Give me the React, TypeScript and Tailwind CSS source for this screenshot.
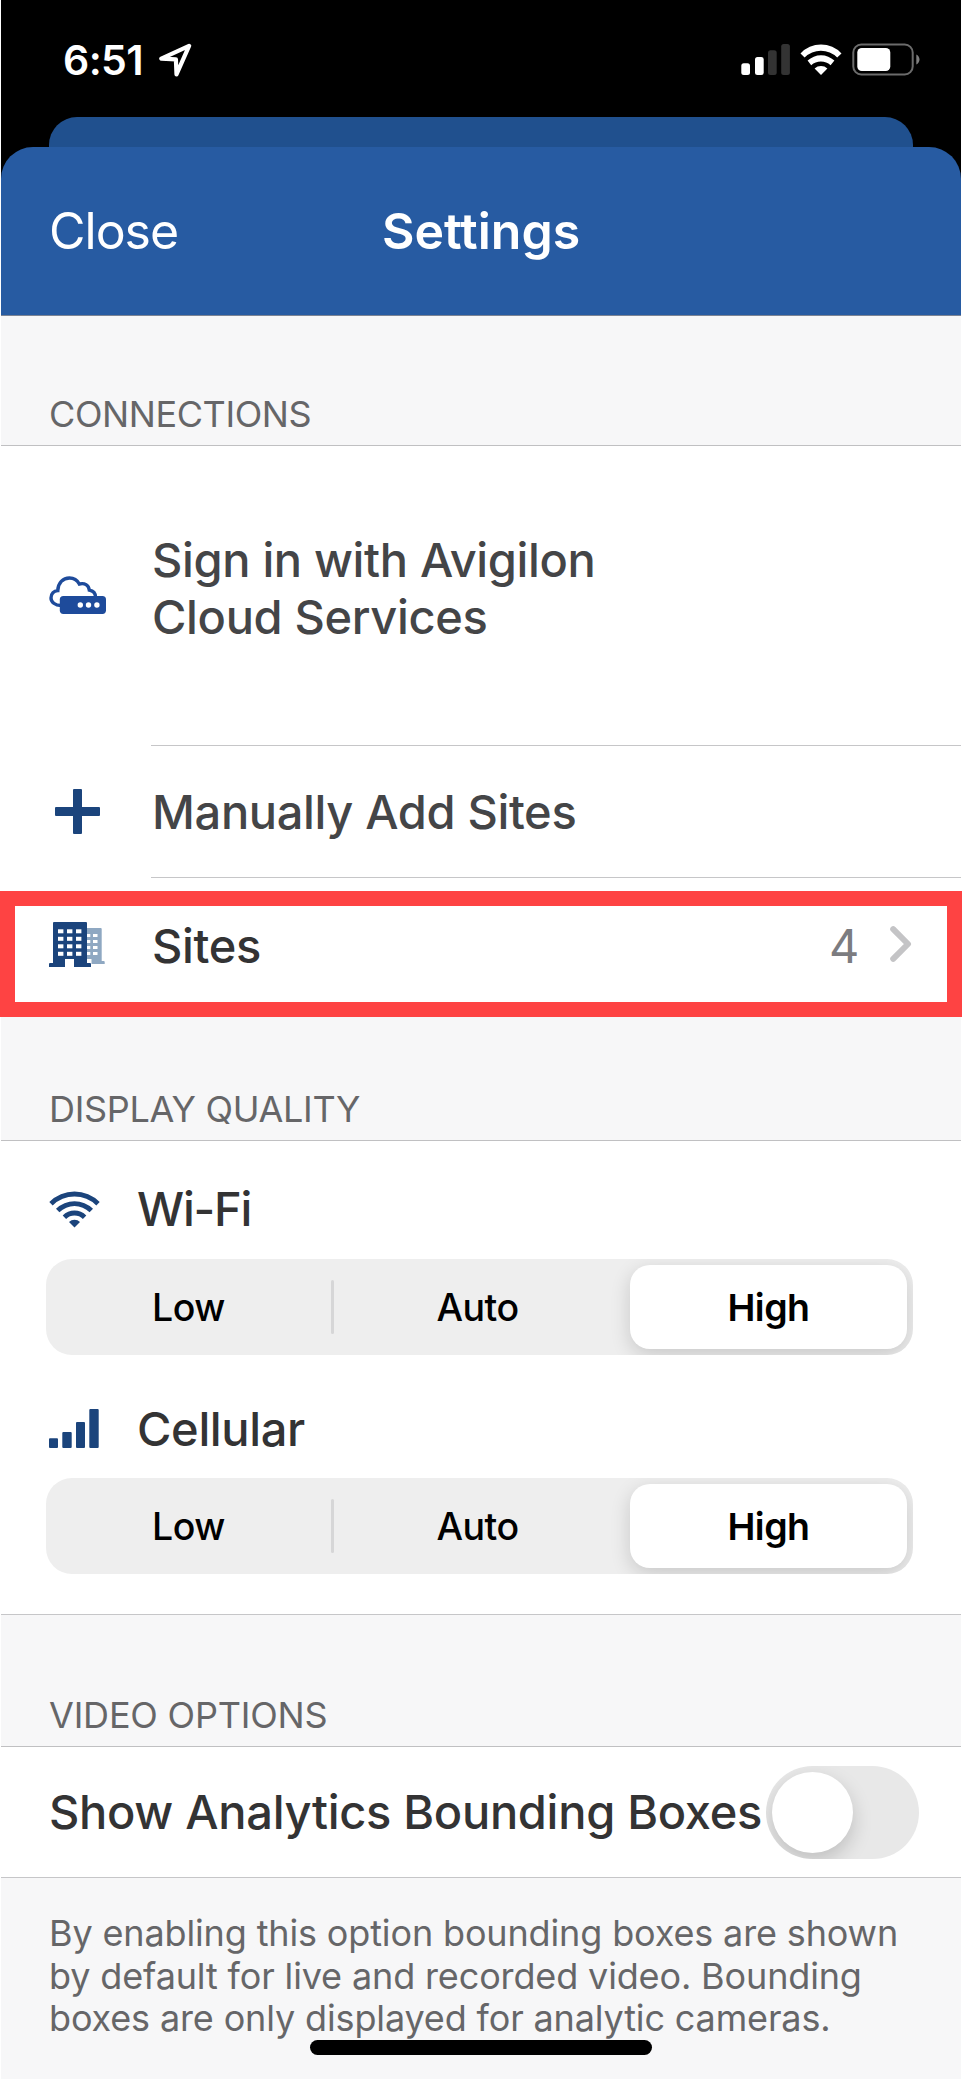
import { useState, type ReactNode } from 'react';
import clsx from 'clsx';

const QUALITIES = ['Low', 'Auto', 'High'];

function LocationArrow() {
  return (
    <svg width="33" height="34" viewBox="0 0 33 34" fill="none" className="text-white">
      <path
        d="M30.1 2.8 2.3 15.7 16.9 16.3 17.5 31.3Z"
        stroke="currentColor"
        strokeWidth="4.2"
        strokeLinejoin="round"
      />
    </svg>
  );
}

function StatusIcons() {
  return (
    <svg width="180" height="34" viewBox="0 0 180 34" fill="white">
      {/* Signal */}
      <rect x="1.3" y="20.3" width="8.7" height="11.7" rx="2.5" />
      <rect x="15" y="14" width="8.7" height="18" rx="2.5" />
      <rect x="28" y="7.3" width="8.7" height="24.7" rx="2.5" fill="#333333" />
      <rect x="41.2" y="1" width="8.7" height="31" rx="2.5" fill="#333333" />
      {/* Wi-Fi */}
      <g transform="translate(60 0)">
        <path d="M.5 10.4A28 28 0 0 1 41.5 10.4L37.2 14.6A23 23 0 0 0 4.6 14.6Z" />
        <path d="M7.6 17.6A19.5 19.5 0 0 1 34.4 17.6L30.6 22.2A14.5 14.5 0 0 0 11.2 22.2Z" />
        <path d="M14.6 25.6A9.5 9.5 0 0 1 27.4 25.6L21 32Z" />
      </g>
      {/* Battery */}
      <rect x="113.3" y="1.5" width="59.4" height="30" rx="8" fill="none" stroke="#6b6b6b" strokeWidth="2" />
      <rect x="117.3" y="5" width="33" height="23" rx="4.5" />
      <path d="M176.300 11.500c1.800.8 3.200 2.800 3.200 5s-1.400 4.200-3.200 5Z" fill="#7f7f7f" />
    </svg>
  );
}

function CloudIcon() {
  return (
    <svg width="57" height="38" viewBox="0 0 57 38" fill="none">
      <path
        d="M12 29.5C6 29.5 2 26 2 22C2 17.5 5 15 8.8 14.6C9 7 14 2 20.5 2C25 2 28.3 4.3 30.3 8C35.5 6.6 39.8 9 40.3 14.2C44.3 15 46.5 17.5 46.5 21"
        stroke="#1e4b9b"
        strokeWidth="3.4"
      />
      <rect x="10.8" y="19.9" width="46.2" height="18" rx="3.6" fill="#1e4b9b" />
      <circle cx="31.3" cy="29" r="2.7" fill="white" />
      <circle cx="39.5" cy="29" r="2.7" fill="white" />
      <circle cx="47.9" cy="29" r="2.7" fill="white" />
    </svg>
  );
}

function PlusIcon() {
  return (
    <svg width="45" height="45" viewBox="0 0 45 45" fill="#1b447c">
      <rect x="18" y="0" width="9" height="45" rx="1" />
      <rect x="0" y="18" width="45" height="9" rx="1" />
    </svg>
  );
}

function BuildingsIcon() {
  return (
    <svg width="56" height="45" viewBox="0 0 56 45">
      <path d="M38 6h13.7a1 1 0 0 1 1 1v32h2a1 1 0 0 1 1 1v2H42.500v-5H38Z" fill="#8fa8c2" />
      {[12, 18, 24, 30].map((y) => (
        <g key={y} fill="white">
          <rect x="37" y={y} width="4.3" height="3" />
          <rect x="44" y={y} width="4.5" height="3" />
        </g>
      ))}
      <path
        d="M4 1a1 1 0 0 1 1-1h32a1 1 0 0 1 1 1v40h3a1 1 0 0 1 1 1v3H25v-8h-9v8H0v-3a1 1 0 0 1 1-1h3Z"
        fill="#1b447c"
      />
      {[7.3, 14.8, 22.3, 29.8].map((y) => (
        <g key={y} fill="white">
          <rect x="9" y={y} width="5.4" height="4" />
          <rect x="18" y={y} width="5.4" height="4" />
          <rect x="27" y={y} width="5.4" height="4" />
        </g>
      ))}
    </svg>
  );
}

function WifiIcon() {
  return (
    <svg width="51" height="37" viewBox="0 0 51 37" fill="#1b447c">
      <path d="M.3 11A35.5 35.5 0 0 1 50.7 11L47.3 14.4A31 31 0 0 0 3.7 14.4Z" />
      <path d="M7 17.8A26.5 26.5 0 0 1 44 17.8L40.6 21.2A21.7 21.7 0 0 0 10.4 21.2Z" />
      <path d="M13.7 24.5A16.6 16.6 0 0 1 37.3 24.5L33.9 27.9A12 12 0 0 0 17.1 27.9Z" />
      <path d="M20 31A7.7 7.7 0 0 1 31 31L25.5 36.5Z" />
    </svg>
  );
}

function CellularIcon() {
  return (
    <svg width="51" height="39" viewBox="0 0 51 39" fill="#1b447c">
      <rect x="0" y="29.3" width="9" height="9.7" rx="1" />
      <rect x="13.3" y="23" width="9.4" height="16" rx="1" />
      <rect x="27" y="13" width="9" height="26" rx="1" />
      <rect x="40.3" y="0" width="9.4" height="39" rx="1" />
    </svg>
  );
}

function Chevron() {
  return (
    <svg width="22" height="36" viewBox="0 0 22 36" fill="none">
      <path d="M3.2 3.2 18 18 3.2 32.8" stroke="#c4c4c6" strokeWidth="6" strokeLinecap="round" strokeLinejoin="round" />
    </svg>
  );
}

function SectionLabel({ className, children }: { className: string; children: ReactNode }) {
  return (
    <h2
      className={clsx(
        'flex items-end border-b border-[#c0c0c2] pb-[13px] pl-12 text-[36px] leading-9 font-normal text-[#666668]',
        className,
      )}
    >
      {children}
    </h2>
  );
}

function Segmented() {
  const [value, setValue] = useState('High');

  return (
    <div className="ml-[45px] grid h-24 w-[867px] grid-cols-3 overflow-hidden rounded-[26px] bg-[#eeeeee] text-[37.5px] leading-none tracking-[-0.5px] text-black">
      {QUALITIES.map((quality, index) => (
        <div key={quality} className="flex items-center">
          <button
            onClick={() => setValue(quality)}
            className={clsx(
              'my-1.5 h-[84px] flex-1 rounded-[20px] pt-0.5',
              value === quality
                ? 'mx-1.5 bg-white font-semibold shadow-[0_6px_20px_rgba(0,0,0,0.16)]'
                : 'font-medium',
            )}
          >
            {quality}
          </button>
          {index < 2 && (
            <span className={clsx('mr-px h-[54px] w-[3px] rounded-full', index === 0 && 'bg-[#d6d6d7]')} />
          )}
        </div>
      ))}
    </div>
  );
}

export default function App() {
  const [boxes, setBoxes] = useState(false);

  return (
    <div className="h-[2079px] w-[962px] overflow-hidden bg-white px-px font-[Inter,sans-serif]">
      <div className="relative bg-[#f7f7f8]">
        {/* Status bar and the sheet stacked behind */}
        <header className="bg-black">
          <div className="flex h-[117px] items-start justify-between pt-[43px] pr-[41px] pl-[62px]">
            <div className="flex items-start">
              <span className="w-24 pt-0.5 text-[41px] leading-[30px] font-semibold tracking-[-0.6px] text-white">
                6:51
              </span>
              <LocationArrow />
            </div>
            <StatusIcons />
          </div>
          <div className="mx-12 h-[30px] rounded-t-[28px] bg-[#20508e]" />
          <div className="grid h-[169px] grid-cols-3 items-center rounded-t-[32px] border-b border-[#7c8494] bg-[#275ba2] px-12 text-[50px] leading-none text-white">
            <button className="text-left tracking-[-1px]">Close</button>
            <h1 className="text-center font-semibold">Settings</h1>
          </div>
        </header>

        <SectionLabel className="h-[130px] tracking-[-0.4px]">CONNECTIONS</SectionLabel>
        <section className="bg-white text-[47px] font-medium tracking-[-0.35px] text-[#444547]">
          <div className="flex h-[300px]">
            <div className="flex w-[150px] items-center pb-0.5 pl-12">
              <CloudIcon />
            </div>
            <div className="flex flex-1 items-center border-b border-[#c6c6c8] pb-4 pl-px leading-[57px]">
              Sign in with Avigilon
              <br />
              Cloud Services
            </div>
          </div>
          <div className="flex h-[132px]">
            <div className="flex w-[150px] items-center pb-px pl-[54px]">
              <PlusIcon />
            </div>
            <div className="flex flex-1 items-center border-b border-[#c6c6c8] pt-0.5 pl-px">Manually Add Sites</div>
          </div>
          <div className="relative flex h-[132px] items-center text-[#333334]">
            <div className="w-[150px] pl-12">
              <BuildingsIcon />
            </div>
            <div className="flex-1 pt-1 pl-px">Sites</div>
            <span className="pt-1 pr-[31px] font-normal text-[#7c7c80]">4</span>
            <div className="pr-[49px]">
              <Chevron />
            </div>
            {/* Highlight frame */}
            <div className="pointer-events-none absolute top-[13px] -right-px -left-px h-[126px] border-[15px] border-[#fe4343]" />
          </div>
        </section>

        <SectionLabel className="h-[131px] tracking-[-0.3px]">DISPLAY QUALITY</SectionLabel>
        <section className="h-[474px] border-b border-[#c6c6c8] bg-white text-[47px] font-medium text-[#333334]">
          <div className="flex h-[118px] items-center pt-[18px] pl-12 tracking-[-1.2px]">
            <div className="w-[88px]">
              <WifiIcon />
            </div>
            Wi-Fi
          </div>
          <Segmented />
          <div className="flex h-[123px] items-center pt-[25px] pl-12 tracking-[-0.35px]">
            <div className="w-[88px] pb-px">
              <CellularIcon />
            </div>
            Cellular
          </div>
          <Segmented />
        </section>

        <SectionLabel className="h-[132px] tracking-[-0.2px]">VIDEO OPTIONS</SectionLabel>
        <section className="flex h-[131px] items-center justify-between border-b border-[#c6c6c8] bg-white pr-[42px] pl-12 text-[47px] font-medium tracking-[-0.3px] text-[#333334]">
          <span className="whitespace-nowrap">Show Analytics Bounding Boxes</span>
          <button
            role="switch"
            aria-checked={boxes}
            onClick={() => setBoxes(!boxes)}
            className={clsx(
              'flex h-[93px] w-[153px] shrink-0 items-center overflow-hidden rounded-full p-1.5',
              boxes ? 'justify-end bg-[#34c759]' : 'bg-[#e8e8e8]',
            )}
          >
            <span className="size-[81px] rounded-full bg-white shadow-[0_8px_20px_rgba(0,0,0,0.18)]" />
          </button>
        </section>

        <p className="h-[201px] pt-[34px] pl-12 text-[36px] leading-[42.5px] tracking-[-0.14px] whitespace-nowrap text-[#666668]">
          By enabling this option bounding boxes are shown
          <br />
          by default for live and recorded video. Bounding
          <br />
          boxes are only displayed for analytic cameras.
        </p>

        {/* Home indicator */}
        <div className="absolute bottom-6 left-[309px] h-[15px] w-[342px] rounded-full bg-black" />
      </div>
    </div>
  );
}
